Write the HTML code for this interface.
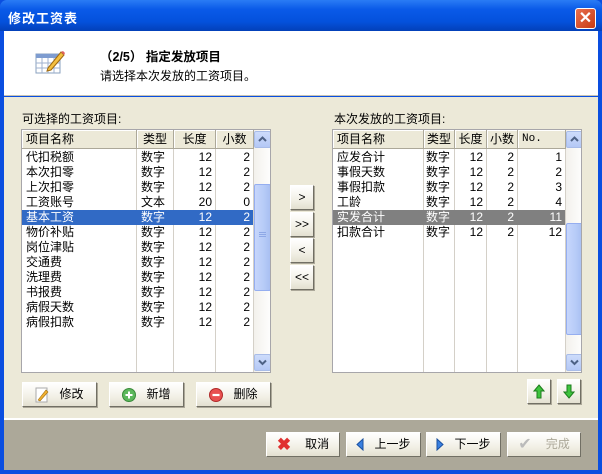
<!DOCTYPE html>
<html><head><meta charset="utf-8"><style>
*{box-sizing:border-box;margin:0;padding:0}
body{width:602px;height:474px;overflow:hidden;font-family:"Liberation Sans","WenQuanYi Zen Hei","Noto Sans CJK SC",sans-serif;font-size:12px;color:#000;background:#fff;position:relative}
.abs{position:absolute}
.win{left:0;top:0;width:602px;height:474px;background:#0a4ee0}
.title{left:0;top:0;width:602px;height:31px;background:linear-gradient(#2a7cf5,#0a5ae8 30%,#0451dc 70%,#0340b8);border-radius:7px 7px 0 0}
.ttext{left:8px;top:8px;color:#fff;font-weight:bold;font-size:13px;letter-spacing:1px}
.close{left:575px;top:8px;width:21px;height:21px;background:linear-gradient(135deg,#e87050,#c83a12);border:1px solid #fff;border-radius:3px;color:#fff;font-weight:bold;font-size:16px;text-align:center;line-height:19px}
.head{left:4px;top:31px;width:594px;height:65px;background:#fff;border-bottom:1px solid #c8c4b4}
.body{left:4px;top:97px;width:594px;height:321px;background:#ece9d8}
.foot{left:4px;top:418px;width:594px;height:52px;background:#aca899;border-top:2px solid #fff}
.list{background:#fff;border:1px solid #a7a6aa;overflow:hidden}
.hdr{position:absolute;top:0;height:19px;background:#ece9d8;border-right:1px solid #aca899;border-bottom:1px solid #aca899;line-height:18px;padding:0 4px;box-shadow:inset 1px 1px #fff}
.row{position:absolute;height:15px;line-height:15px;white-space:nowrap}
.c{position:absolute;top:0;height:15px;padding:0 4px}
.r{text-align:right}
.vl{position:absolute;top:19px;bottom:0;width:1px;background:#d4d0c8}
.sb{position:absolute;top:0;bottom:0;width:17px;background:linear-gradient(90deg,#f3f1ec,#fefefe)}
.sbtn{position:absolute;left:0;width:17px;height:17px;background:linear-gradient(#cddcfb,#b4c8f5);border:1px solid #a8bce8;border-radius:2px}
.sbtn svg{position:absolute;left:3px;top:4px}
.thumb{position:absolute;left:0;width:17px;background:linear-gradient(90deg,#c7d6fc,#b6cbf7 60%,#a9bff2);border:1px solid #95aef0;border-radius:2px}
.btn{position:absolute;height:25px;background:linear-gradient(#fff,#f2f0e6 60%,#e3e0d0);border:1px solid #fff;border-right-color:#716f64;border-bottom-color:#716f64;box-shadow:1px 1px 0 #aca899;text-align:center;line-height:23px}
.ic{display:inline-block;vertical-align:middle;margin-right:10px}
.sel{background:#316ac5;color:#fff}
.gsel{background:#808080;color:#fff}
</style></head><body>
<div class="abs win"></div>
<div class="abs title"></div>
<div class="abs ttext">修改工资表</div>
<div class="abs close">✕</div>
<div class="abs head"></div>
<svg class="abs" style="left:35px;top:48px" width="30" height="28" viewBox="0 0 30 28">
<rect x="1" y="6" width="24" height="19" fill="#fff" stroke="#8aa0bf"/>
<rect x="1" y="6" width="24" height="4" fill="#7e9cd0"/>
<g stroke="#9fb2cf"><line x1="1" y1="15" x2="25" y2="15"/><line x1="1" y1="20" x2="25" y2="20"/><line x1="7" y1="10" x2="7" y2="25"/><line x1="13" y1="10" x2="13" y2="25"/><line x1="19" y1="10" x2="19" y2="25"/></g>
<path d="M13 20 L26 4 L29 7 L16 22 L12 23 Z" fill="#f4c040" stroke="#a06a10"/>
<path d="M26 4 L29 7 L30 5 L28 3Z" fill="#e06060"/>
</svg>
<div class="abs" style="left:100px;top:46px;font-weight:bold;font-size:12.5px">（2/5） 指定发放项目</div>
<div class="abs" style="left:100px;top:67px">请选择本次发放的工资项目。</div>
<div class="abs body"></div>
<div class="abs" style="left:22px;top:110px">可选择的工资项目:</div>
<div class="abs" style="left:334px;top:110px">本次发放的工资项目:</div>

<div class="abs list" style="left:21px;top:129px;width:250px;height:244px">
<div class="hdr" style="left:0;width:115px">项目名称</div>
<div class="hdr" style="left:115px;width:37px;text-align:center">类型</div>
<div class="hdr" style="left:152px;width:42px;text-align:center">长度</div>
<div class="hdr" style="left:194px;width:38px;text-align:center">小数</div>
<div class="vl" style="left:114px"></div><div class="vl" style="left:151px"></div><div class="vl" style="left:193px"></div><div class="vl" style="left:231px"></div>
<div id="L"></div>
<div class="sb" style="left:232px"><div class="sbtn" style="top:1px"><svg width="9" height="7"><path d="M1 5 L4.5 1.5 L8 5" fill="none" stroke="#4d6185" stroke-width="2"/></svg></div><div class="thumb" style="top:54px;height:107px"><div style="position:absolute;left:4px;top:47px;width:7px;height:5px;border-top:1px solid #8ea8e6;border-bottom:1px solid #8ea8e6"></div><div style="position:absolute;left:4px;top:49px;width:7px;height:1px;background:#8ea8e6"></div></div><div class="sbtn" style="bottom:1px"><svg width="9" height="7"><path d="M1 1.5 L4.5 5 L8 1.5" fill="none" stroke="#4d6185" stroke-width="2"/></svg></div></div>
</div>

<div class="abs list" style="left:332px;top:129px;width:250px;height:244px">
<div class="hdr" style="left:0;width:91px">项目名称</div>
<div class="hdr" style="left:91px;width:31px;text-align:center;padding:0">类型</div>
<div class="hdr" style="left:122px;width:32px;text-align:center;padding:0">长度</div>
<div class="hdr" style="left:154px;width:31px;text-align:center;padding:0">小数</div>
<div class="hdr" style="left:185px;width:48px;font-family:'Liberation Mono',monospace;font-size:11px">No.</div>
<div class="vl" style="left:90px"></div><div class="vl" style="left:121px"></div><div class="vl" style="left:153px"></div><div class="vl" style="left:184px"></div><div class="vl" style="left:232px"></div>
<div id="R"></div>
<div class="sb" style="left:233px"><div class="sbtn" style="top:1px"><svg width="9" height="7"><path d="M1 5 L4.5 1.5 L8 5" fill="none" stroke="#4d6185" stroke-width="2"/></svg></div><div class="thumb" style="top:93px;height:112px"></div><div class="sbtn" style="bottom:1px"><svg width="9" height="7"><path d="M1 1.5 L4.5 5 L8 1.5" fill="none" stroke="#4d6185" stroke-width="2"/></svg></div></div>
</div>

<div class="btn" style="left:290px;top:185px;width:24px">&gt;</div>
<div class="btn" style="left:290px;top:212px;width:24px">&gt;&gt;</div>
<div class="btn" style="left:290px;top:238px;width:24px">&lt;</div>
<div class="btn" style="left:290px;top:265px;width:24px">&lt;&lt;</div>

<div class="btn" style="left:22px;top:382px;width:75px"><svg class="ic" width="14" height="16"><rect x="1" y="1" width="11" height="14" fill="#fff" stroke="#aaa"/><path d="M3 13 L11 3 L13 5 L5 14 Z" fill="#f0b030" stroke="#a07010" stroke-width=".6"/></svg>修改</div>
<div class="btn" style="left:109px;top:382px;width:75px"><svg class="ic" width="14" height="14"><circle cx="7" cy="7" r="6.5" fill="#5cb85c" stroke="#3a8a3a"/><path d="M7 3.5V10.5M3.5 7H10.5" stroke="#fff" stroke-width="2"/></svg>新增</div>
<div class="btn" style="left:196px;top:382px;width:75px"><svg class="ic" width="14" height="14"><circle cx="7" cy="7" r="6.5" fill="#e85050" stroke="#b02a2a"/><path d="M3.5 7H10.5" stroke="#fff" stroke-width="2.2"/></svg>删除</div>
<div class="btn" style="left:527px;top:379px;width:24px;padding-top:4px"><svg width="12" height="15"><path d="M6 1 L11 7 H8 V14 H4 V7 H1 Z" fill="#3ec43e" stroke="#1c7c1c"/></svg></div>
<div class="btn" style="left:557px;top:379px;width:24px;padding-top:4px"><svg width="12" height="15"><path d="M6 14 L11 8 H8 V1 H4 V8 H1 Z" fill="#3ec43e" stroke="#1c7c1c"/></svg></div>

<div class="abs foot"></div>
<div class="btn" style="left:266px;top:432px;width:74px"><span class="ic" style="color:#e03030;font-weight:bold;font-size:17px;margin-right:14px">✖</span>取消</div>
<div class="btn" style="left:346px;top:432px;width:75px"><svg class="ic" width="8" height="13"><path d="M7 1 L1 6.5 L7 12Z" fill="#3a80e0" stroke="#1a50a0"/></svg>上一步</div>
<div class="btn" style="left:426px;top:432px;width:75px"><svg class="ic" width="8" height="13"><path d="M1 1 L7 6.5 L1 12Z" fill="#3a80e0" stroke="#1a50a0"/></svg>下一步</div>
<div class="btn" style="left:507px;top:432px;width:74px;color:#aca899"><span class="ic" style="color:#bbb;font-size:16px;margin-right:14px">✔</span>完成</div>

<script>
var L=[["代扣税额","数字",12,2],["本次扣零","数字",12,2],["上次扣零","数字",12,2],["工资账号","文本",20,0],["基本工资","数字",12,2],["物价补贴","数字",12,2],["岗位津贴","数字",12,2],["交通费","数字",12,2],["洗理费","数字",12,2],["书报费","数字",12,2],["病假天数","数字",12,2],["病假扣款","数字",12,2]];
var h="";L.forEach(function(r,i){h+='<div class="row'+(i==4?' sel':'')+'" style="left:0;width:231px;top:'+(20+i*15)+'px"><span class="c" style="left:0">'+r[0]+'</span><span class="c" style="left:115px">'+r[1]+'</span><span class="c r" style="left:152px;width:42px">'+r[2]+'</span><span class="c r" style="left:194px;width:38px">'+r[3]+'</span></div>'});
document.getElementById("L").innerHTML=h;
var R=[["应发合计",1],["事假天数",2],["事假扣款",3],["工龄",4],["实发合计",11],["扣款合计",12]];
h="";R.forEach(function(r,i){h+='<div class="row'+(i==4?' gsel':'')+'" style="left:0;width:232px;top:'+(20+i*15)+'px"><span class="c" style="left:0">'+r[0]+'</span><span class="c" style="left:91px;padding:0 2px">数字</span><span class="c r" style="left:122px;width:32px">12</span><span class="c r" style="left:154px;width:31px">2</span><span class="c r" style="left:185px;width:48px">'+r[1]+'</span></div>'});
document.getElementById("R").innerHTML=h;
</script>
</body></html>
